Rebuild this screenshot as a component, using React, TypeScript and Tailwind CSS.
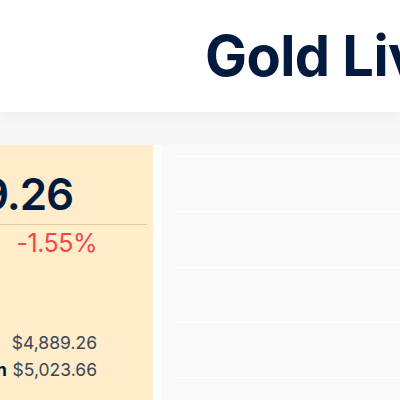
import React from "react";

export default function App() {
  const lines = [11, 66, 122, 177, 232];
  return (
    <div
      className="relative w-[400px] h-[400px] overflow-hidden bg-[#f7f7f7]"
      style={{ fontFamily: "Inter, 'Noto Sans', sans-serif" }}
    >
      <header className="h-[112px] bg-white shadow-[0_4px_14px_rgba(0,0,0,0.04)]">
        <h1 className="pl-[205px] pt-[28px] text-[56px] leading-none font-bold tracking-[-0.01em] text-[#011a3e] whitespace-nowrap">
          Gold Live Price
        </h1>
      </header>
      <main className="mt-[33px] flex h-[255px]">
        <section className="w-[153px] shrink-0 bg-[#feecca] overflow-hidden">
          <div className="mt-[27px] w-[73px] flex justify-end">
            <span className="whitespace-nowrap text-[44px] leading-none font-semibold tracking-tight text-[#011a3e]">
              $4,889.26
            </span>
          </div>
          <div className="mt-[8px] h-px w-[147px] bg-[#e2c995]" />
          <div className="mt-[6px] w-[97px] flex justify-end">
            <span className="whitespace-nowrap text-[25px] leading-none tracking-[-0.02em] text-[#f5474a]">-1.55%</span>
          </div>
          <div className="mt-[73px] w-[97px] flex justify-end">
            <div className="grid grid-cols-[auto_auto] gap-x-[5px] text-[17.5px] leading-[27px] whitespace-nowrap">
              <span className="font-bold text-[#011a3e] text-left">Bid</span>
              <span className="text-[#414654] text-right">$4,889.26</span>
              <span className="font-bold text-[#011a3e] text-left">Open</span>
              <span className="text-[#414654] text-right">$5,023.66</span>
            </div>
          </div>
        </section>
        <section className="flex-1 bg-white pl-[9px]">
          <div className="relative h-full bg-[#f9f9f9]">
            {lines.map((y) => (
              <div
                key={y}
                className="absolute left-[11px] right-0 h-px bg-white"
                style={{ top: y }}
              />
            ))}
          </div>
        </section>
      </main>
    </div>
  );
}
